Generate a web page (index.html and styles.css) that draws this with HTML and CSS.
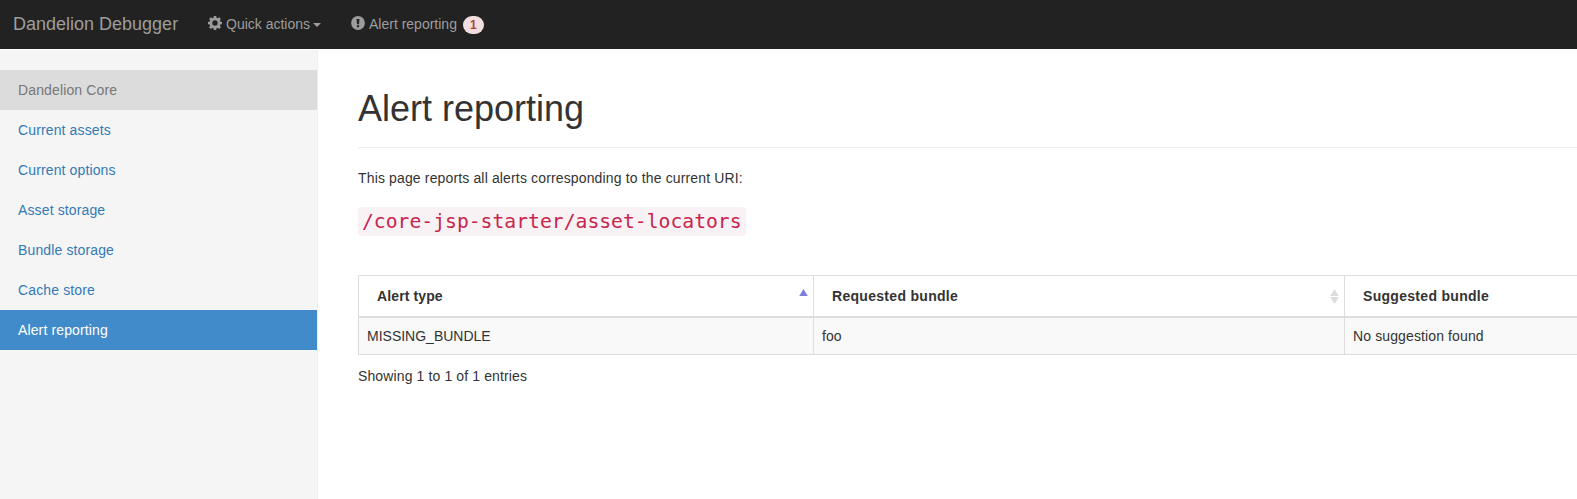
FILE: index.html
```html
<!DOCTYPE html>
<html lang="en">
<head>
<meta charset="utf-8">
<title>Dandelion Debugger</title>
<link rel="stylesheet" href="styles.css">
</head>
<body>
<header class="navbar">
  <a class="brand">Dandelion Debugger</a>
  <a class="nav-link actions">
    <svg class="icon" viewBox="0 0 14 14"><path fill="currentColor" fill-rule="evenodd" d="M5.800 0h2.400l.4 1.900 1 .4 1.600-1.100 1.700 1.700-1.100 1.600.4 1 1.800.4v2.300l-1.800.4-.4 1 1.100 1.600-1.700 1.700-1.600-1.100-1 .4-.4 1.800H5.800l-.4-1.800-1-.4-1.600 1.100-1.700-1.700 1.100-1.600-.4-1L0 8.200V5.900l1.800-.4.4-1L1.100 2.900l1.700-1.700 1.600 1.100 1-.4zM7 4.300a2.700 2.700 0 1 0 0 5.400 2.700 2.700 0 0 0 0-5.400z"/></svg>
    <span>Quick actions</span><i class="caret"></i>
  </a>
  <a class="nav-link">
    <svg class="icon" viewBox="0 0 14 14"><circle cx="7" cy="7" r="6.900" fill="currentColor"/><path fill="#222" d="M5.500 2.900h3L8 8.200H6zM5.900 9.200h2.200v2.100H5.900z"/></svg>
    <span>Alert reporting</span><span class="badge">1</span>
  </a>
</header>
<div class="layout">
  <nav class="sidebar">
    <span class="item heading">Dandelion Core</span>
    <a class="item">Current assets</a>
    <a class="item">Current options</a>
    <a class="item">Asset storage</a>
    <a class="item">Bundle storage</a>
    <a class="item">Cache store</a>
    <a class="item active">Alert reporting</a>
  </nav>
  <main class="main">
    <h1 class="title">Alert reporting</h1>
    <p class="intro">This page reports all alerts corresponding to the current URI:</p>
    <code class="uri">/core-jsp-starter/asset-locators</code>
    <table class="alerts">
      <colgroup><col class="c1"><col class="c2"><col class="c3"></colgroup>
      <thead><tr>
        <th><div class="head first"><span>Alert type</span><svg class="sort" viewBox="0 0 9 15"><path fill="#7c80dc" d="M.2 7 4.500 0l4.300 7z"/></svg></div></th>
        <th><div class="head"><span>Requested bundle</span><svg class="sort" viewBox="0 0 9 15"><path fill="#dcdcdc" d="M.2 7 4.500 0l4.300 7zM.2 8h8.600l-4.300 7z"/></svg></div></th>
        <th><div class="head"><span>Suggested bundle</span></div></th>
      </tr></thead>
      <tbody><tr><td>MISSING_BUNDLE</td><td>foo</td><td class="suggestion">No suggestion found</td></tr></tbody>
    </table>
    <p class="info">Showing 1 to 1 of 1 entries</p>
  </main>
</div>
</body>
</html>
```
FILE: styles.css
```css
* { box-sizing: border-box; }
body {
  margin: 0;
  height: 499px;
  overflow: hidden;
  font: 14px/20px "Liberation Sans", Arial, sans-serif;
  color: #333;
  background: #fff;
}
.navbar {
  display: flex;
  height: 49px;
  padding: 14px 13px 0;
  background: #222;
  color: #9d9d9d;
}
.brand { width: 195px; font-size: 18px; line-height: 20px; }
.nav-link { display: flex; align-items: flex-start; height: 20px; }
.actions { width: 143px; }
.icon { width: 14px; height: 14px; margin: 2px 4px 0 0; }
.caret {
  margin: 9px 0 0 3px;
  border: 4px solid transparent;
  border-top-color: currentColor;
  border-bottom: 0;
}
.badge {
  margin: 2px 0 0 6px;
  width: 21px;
  height: 18px;
  border-radius: 9px;
  background: #f2dede;
  color: #a94442;
  font-size: 12px;
  font-weight: bold;
  line-height: 18px;
  text-align: center;
}
.layout { display: flex; height: 449px; margin-top: 1px; }
.sidebar {
  flex: none;
  width: 318px;
  padding-top: 20px;
  background: #f5f5f5;
  border-right: 1px solid #eee;
}
.item {
  display: block;
  height: 40px;
  padding: 10px 18px;
  color: #337ab7;
  letter-spacing: .13px;
}
.heading { background: #dcdcdc; color: #777; }
.active { background: #428bca; color: #fff; }
.main { flex: 1; min-width: 0; padding: 39px 0 0 40px; overflow: hidden; }
.title {
  margin: 0 0 20px;
  height: 59px;
  border-bottom: 1px solid #eee;
  font-size: 36px;
  font-weight: normal;
  line-height: 40px;
}
.intro { margin: 0 0 19px; letter-spacing: .145px; }
.uri {
  display: block;
  width: 388px;
  height: 29px;
  padding: 1px 4px 0;
  border-radius: 4px;
  background: #f9f2f4;
  color: #c7254e;
  font: 19.720px/28px "DejaVu Sans Mono", monospace;
}
.alerts {
  width: 1340px;
  margin-top: 39px;
  table-layout: fixed;
  border-collapse: collapse;
}
.c1 { width: 455px; }
.c2 { width: 531px; }
.alerts th, .alerts td { border: 1px solid #ddd; text-align: left; vertical-align: top; }
.alerts th { padding: 0; border-bottom-width: 2px; }
.alerts td { height: 37px; padding: 8px; background: #f9f9f9; }
.alerts .suggestion { letter-spacing: .12px; }
.head { display: flex; justify-content: space-between; height: 40px; padding: 10px 5px 0 18px; letter-spacing: .3px; }
.first { letter-spacing: .12px; }
.sort { width: 9px; height: 15px; margin-top: 3px; }
.info { margin: 11px 0 0; letter-spacing: .12px; }
```
